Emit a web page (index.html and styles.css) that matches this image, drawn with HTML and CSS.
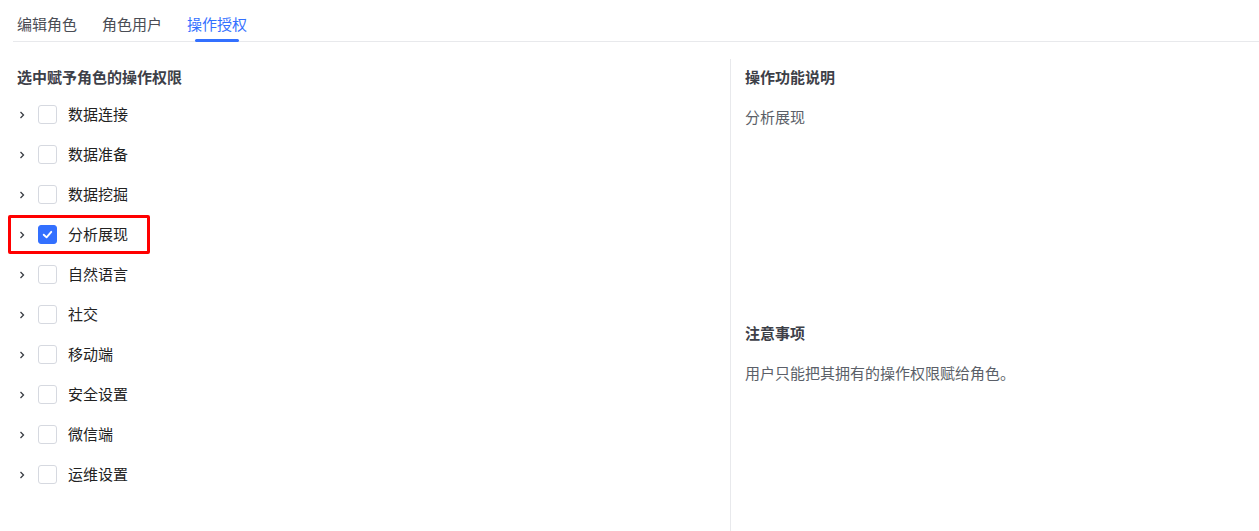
FILE: index.html
```html
<!DOCTYPE html>
<html lang="zh-CN">
<head>
    <meta charset="UTF-8">
    <meta name="viewport" content="width=device-width, initial-scale=1.0">
    <title>操作授权</title>
    <link rel="stylesheet" href="styles.css">
</head>
<body>

    <div class="tabs">
        <div class="tab">编辑角色</div>
        <div class="tab">角色用户</div>
        <div class="tab active">操作授权</div>
    </div>

    <div class="panel">
        <div class="perm-list">
            <div class="section-title">选中赋予角色的操作权限</div>
            <ul class="tree">
                <li class="node">
                    <svg class="arrow" viewBox="0 0 8 8"><polyline points="2.5,1 5.5,4 2.5,7"/></svg>
                    <span class="check"></span>
                    <span class="label">数据连接</span>
                </li>
                <li class="node">
                    <svg class="arrow" viewBox="0 0 8 8"><polyline points="2.5,1 5.5,4 2.5,7"/></svg>
                    <span class="check"></span>
                    <span class="label">数据准备</span>
                </li>
                <li class="node">
                    <svg class="arrow" viewBox="0 0 8 8"><polyline points="2.5,1 5.5,4 2.5,7"/></svg>
                    <span class="check"></span>
                    <span class="label">数据挖掘</span>
                </li>
                <li class="node marked">
                    <svg class="arrow" viewBox="0 0 8 8"><polyline points="2.5,1 5.5,4 2.5,7"/></svg>
                    <span class="check checked">
                        <svg viewBox="0 0 18 18"><polyline points="5,9.2 8,12 13,6.2"/></svg>
                    </span>
                    <span class="label">分析展现</span>
                </li>
                <li class="node">
                    <svg class="arrow" viewBox="0 0 8 8"><polyline points="2.5,1 5.5,4 2.5,7"/></svg>
                    <span class="check"></span>
                    <span class="label">自然语言</span>
                </li>
                <li class="node">
                    <svg class="arrow" viewBox="0 0 8 8"><polyline points="2.5,1 5.5,4 2.5,7"/></svg>
                    <span class="check"></span>
                    <span class="label">社交</span>
                </li>
                <li class="node">
                    <svg class="arrow" viewBox="0 0 8 8"><polyline points="2.5,1 5.5,4 2.5,7"/></svg>
                    <span class="check"></span>
                    <span class="label">移动端</span>
                </li>
                <li class="node">
                    <svg class="arrow" viewBox="0 0 8 8"><polyline points="2.5,1 5.5,4 2.5,7"/></svg>
                    <span class="check"></span>
                    <span class="label">安全设置</span>
                </li>
                <li class="node">
                    <svg class="arrow" viewBox="0 0 8 8"><polyline points="2.5,1 5.5,4 2.5,7"/></svg>
                    <span class="check"></span>
                    <span class="label">微信端</span>
                </li>
                <li class="node">
                    <svg class="arrow" viewBox="0 0 8 8"><polyline points="2.5,1 5.5,4 2.5,7"/></svg>
                    <span class="check"></span>
                    <span class="label">运维设置</span>
                </li>
            </ul>
        </div>

        <div class="info">
            <div class="section-title">操作功能说明</div>
            <div class="info-text desc">分析展现</div>
            <div class="section-title">注意事项</div>
            <div class="info-text">用户只能把其拥有的操作权限赋给角色。</div>
        </div>
    </div>

</body>
</html>
```

FILE: styles.css
```css
body {
    margin: 0;
    background-color: #fff;
    font-family: "Noto Sans CJK SC", "Noto Sans", sans-serif;
    font-size: 15px;
    color: #333;
}

/* tabs */
.tabs {
    display: flex;
    gap: 25px;
    height: 41px;
    margin-left: 13px;
    padding-left: 4px;
    border-bottom: 1px solid #e8e9ec;
}

.tab {
    position: relative;
    padding-top: 14px;
    line-height: 20px;
    color: #4a4d55;
}

.tab.active {
    color: #3370ff;
}

.tab.active::after {
    content: "";
    position: absolute;
    left: 8px;
    right: 8px;
    bottom: -1px;
    height: 3px;
    border-radius: 2px;
    background-color: #3370ff;
}

/* body */
.panel {
    display: grid;
    grid-template-columns: 730px 1fr;
    margin-top: 17px;
    min-height: 472px;
}

.section-title {
    font-weight: bold;
    line-height: 20px;
    color: #3d4048;
}

.perm-list {
    padding: 8px 0 0 17px;
}

.tree {
    list-style: none;
    margin: 7px 0 0;
    padding: 0;
}

.node {
    position: relative;
    display: flex;
    align-items: center;
    height: 40px;
}

.arrow {
    width: 8px;
    height: 8px;
    margin-left: 1px;
    margin-top: 1px;
    fill: none;
    stroke: #3a3d44;
    stroke-width: 1.3;
}

.check {
    box-sizing: border-box;
    width: 19px;
    height: 19px;
    margin-left: 12px;
    border: 1px solid #d6d9e0;
    border-radius: 3px;
    background-color: #fff;
}

.check.checked {
    border-color: #3370ff;
    background-color: #3370ff;
}

.check svg {
    display: block;
    width: 17px;
    height: 17px;
    fill: none;
    stroke: #fff;
    stroke-width: 2;
    stroke-linecap: round;
    stroke-linejoin: round;
}

.label {
    margin-left: 11px;
    line-height: 20px;
    color: #222;
}

/* annotation box round the selected row */
.node.marked::after {
    content: "";
    position: absolute;
    left: -9px;
    top: 1px;
    width: 142px;
    height: 39px;
    box-sizing: border-box;
    border: 3px solid #f00;
    border-radius: 2px;
}

.info {
    border-left: 1px solid #e8e9ec;
    padding: 8px 0 0 14px;
}

.info-text {
    margin-top: 20px;
    line-height: 20px;
    color: #5b5f68;
}

.info-text.desc {
    height: 216px;
}
```
